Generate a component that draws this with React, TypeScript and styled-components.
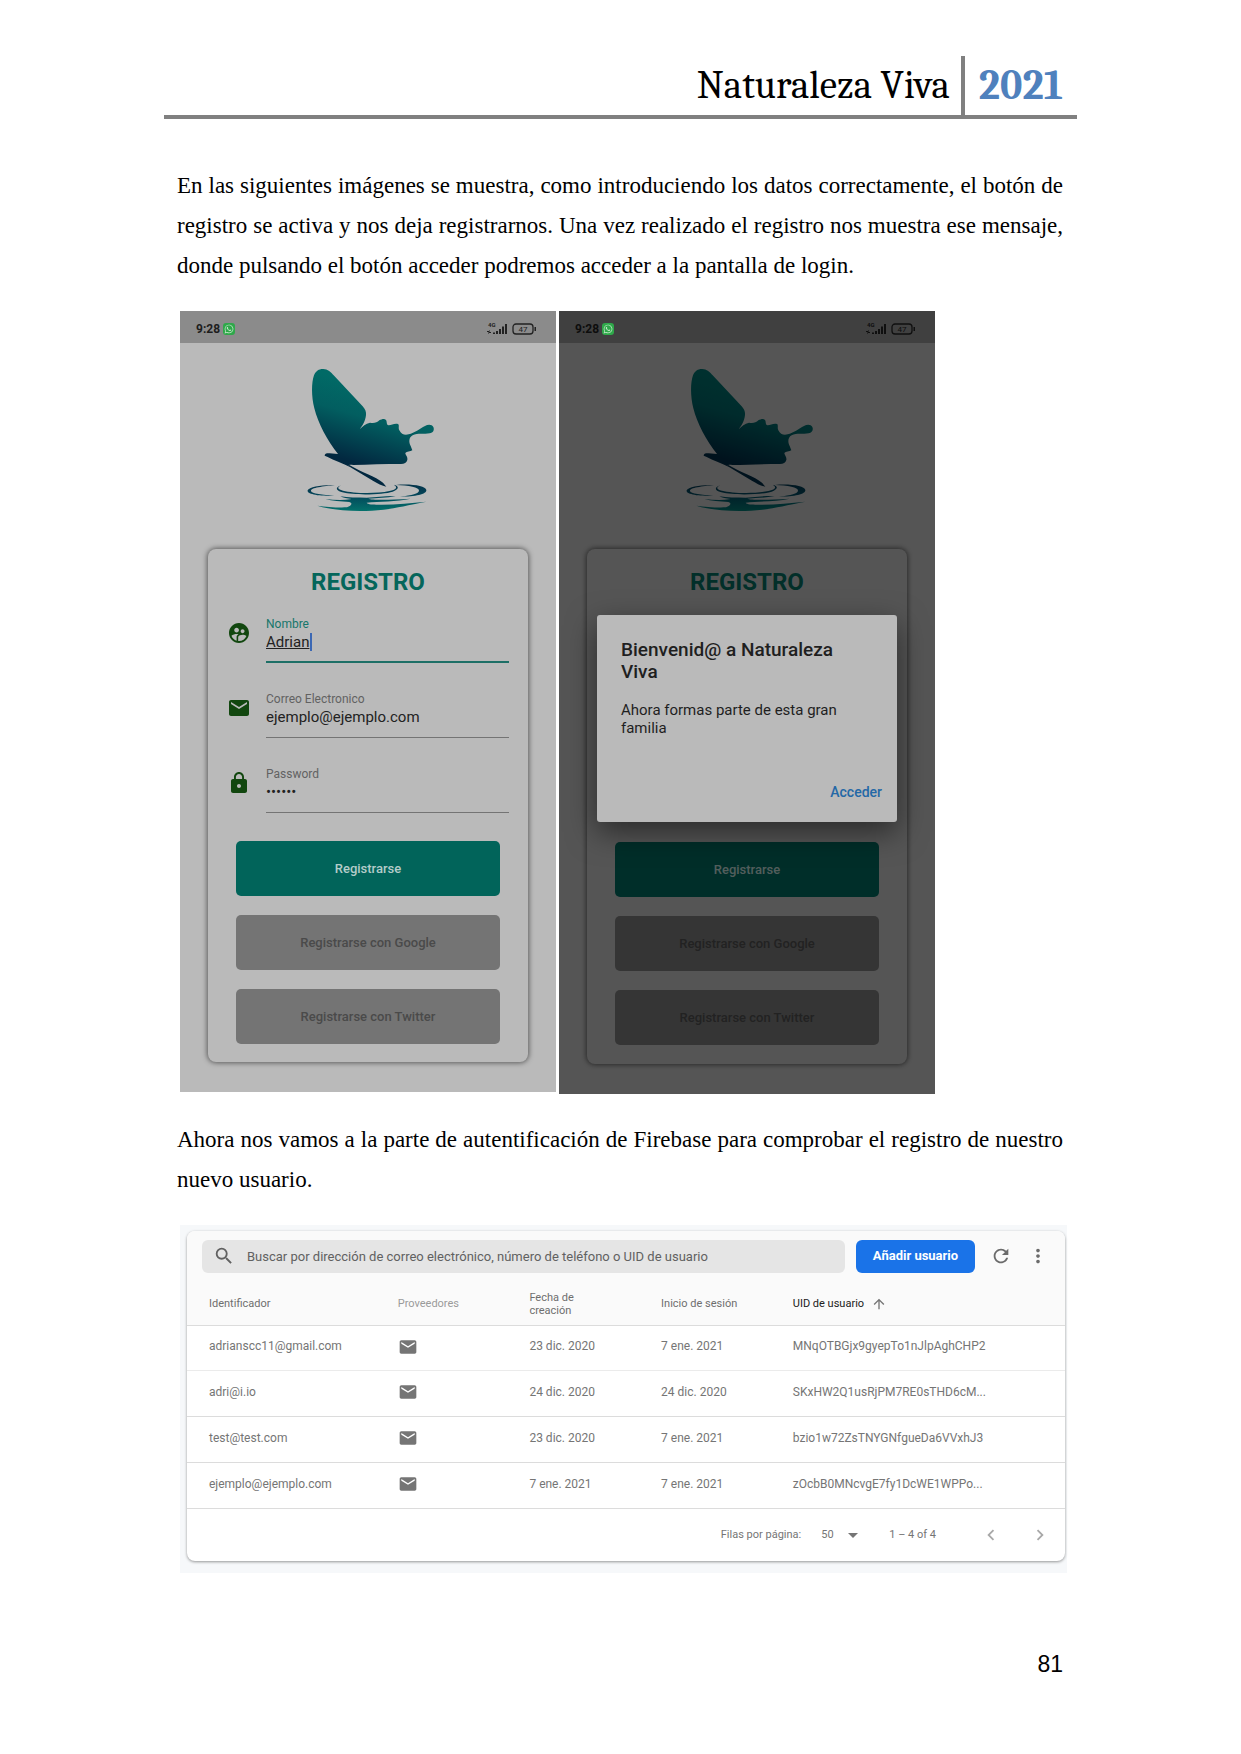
import React, { useId } from "react";
import styled, { createGlobalStyle } from "styled-components";
import {
  MdSupervisedUserCircle,
  MdEmail,
  MdLock,
  MdSearch,
  MdRefresh,
  MdMoreVert,
  MdArrowUpward,
  MdArrowDropDown,
  MdChevronLeft,
  MdChevronRight,
} from "react-icons/md";
import { FaWhatsapp } from "react-icons/fa";

const GlobalStyle = createGlobalStyle`
  *, *::before, *::after { box-sizing: border-box; }
  body { margin: 0; background: #fff; }
  button, input, select { font: inherit; }
`;

const Page = styled.main`
  padding: 56px 178px 76px 177px;
  color: #000;
`;

const PageHeader = styled.header`
  display: flex;
  justify-content: flex-end;
  margin: 0 -14px 0 -13px;
  border-bottom: 4px solid #808080;
  font-family: Cambria, Caladea, "Noto Serif", "Liberation Serif", serif;
  font-size: 39px;
  line-height: 59px;
`;

const DocTitle = styled.span`
  padding-right: 11px;
  border-right: 4px solid #808080;
`;

const Year = styled.strong`
  padding: 0 14px 0 14px;
  color: #4f81bd;
  font-size: 42px;
`;

const Paragraph = styled.p<{ $top: number }>`
  margin: ${(p) => p.$top}px 0 25px;
  font-family: "Liberation Serif", "Times New Roman", serif;
  font-size: 23px;
  line-height: 40px;
  text-align: justify;
`;

const Phones = styled.div`
  display: flex;
  align-items: flex-start;
  gap: 3px;
  padding-left: 3px;
`;

const PhoneFrame = styled.section`
  position: relative;
  width: 376px;
  padding-bottom: 30px;
  background: #bababa;
  font-family: Roboto, "Liberation Sans", sans-serif;
  color: #1d1d1d;
`;

const StatusBar = styled.div`
  display: flex;
  align-items: center;
  gap: 3px;
  height: 32px;
  padding: 3px 19px 0 16px;
  background: #8b8b8b;
`;

const Clock = styled.span`
  font-size: 12px;
  font-weight: 700;
  line-height: 16px;
`;

const ChatBadge = styled.span`
  z-index: 2;
  display: grid;
  place-items: center;
  width: 12px;
  height: 12px;
  border-radius: 3px;
  background: #2fa84a;
  color: #c2e8c8;
  font-size: 10px;
`;

const StatusIcons = styled.svg`
  margin-left: auto;
`;

const Logo = styled.svg`
  display: block;
  margin: 17px auto 29px;
`;

const FormCard = styled.form<{ $roomy?: boolean }>`
  display: flex;
  flex-direction: column;
  margin: 0 28px;
  padding: 19px 19px ${(p) => (p.$roomy ? 19 : 18)}px;
  border-radius: 8px;
  background: #bababa;
  box-shadow: 0 0 5px 1px rgba(0, 0, 0, 0.5);
`;

const FormTitle = styled.h2`
  margin: 0 0 21px;
  color: #05665b;
  font-size: 24px;
  font-weight: 700;
  line-height: 28px;
  text-align: center;
`;

const Fields = styled.div<{ $covered?: boolean }>`
  display: grid;
  gap: 29px;
  visibility: ${(p) => (p.$covered ? "hidden" : "visible")};
`;

const FieldRow = styled.div`
  display: flex;
  gap: 15px;
  height: 46px;
`;

const FieldIcon = styled.span`
  display: flex;
  padding-top: 4px;
  color: #12470f;
  font-size: 24px;
`;

const FieldBody = styled.div<{ $active?: boolean }>`
  display: flex;
  flex-direction: column;
  flex: 1;
  min-width: 0;
  border-bottom: ${(p) => (p.$active ? "2px solid #1d6f66" : "1px solid #747474")};

  label {
    color: ${(p) => (p.$active ? "#16766b" : "#626262")};
    font-size: 12px;
    line-height: 14px;
  }
`;

const ValueLine = styled.div`
  display: flex;
  align-items: center;
  height: 21px;
`;

const FieldInput = styled.input<{ $active?: boolean }>`
  width: ${(p) => (p.$active ? "44px" : "100%")};
  height: 20px;
  padding: 0;
  border: 0;
  outline: 0;
  background: transparent;
  color: #222;
  font-size: 15px;
  line-height: 20px;
  text-decoration: ${(p) => (p.$active ? "underline" : "none")};
`;

const Caret = styled.span`
  width: 2px;
  height: 18px;
  background: #3c68b4;
`;

const Actions = styled.div<{ $roomy?: boolean }>`
  display: grid;
  gap: 19px;
  margin: ${(p) => (p.$roomy ? 29 : 28)}px 9px 0;
`;

const ActionButton = styled.button<{ $primary?: boolean }>`
  height: 55px;
  padding: 0;
  border: 0;
  border-radius: 5px;
  background: ${(p) => (p.$primary ? "#01645a" : "#747474")};
  color: ${(p) => (p.$primary ? "#b4ccc9" : "#4a4a4a")};
  font-size: 13px;
  font-weight: 500;
`;

const Scrim = styled.div`
  position: absolute;
  inset: 0;
  z-index: 1;
  display: flex;
  align-items: flex-start;
  justify-content: center;
  padding-top: 304px;
  background: rgba(0, 0, 0, 0.54);
`;

const Dialog = styled.div`
  display: flex;
  flex-direction: column;
  width: 300px;
  height: 207px;
  padding: 24px 15px 20px 24px;
  border-radius: 3px;
  background: #bababa;
  box-shadow: 0 10px 30px rgba(0, 0, 0, 0.5);
  color: #1f1f1f;

  h3 {
    margin: 0 0 18px;
    padding-right: 20px;
    font-size: 19px;
    font-weight: 500;
    line-height: 22px;
  }

  p {
    margin: 0;
    padding-right: 20px;
    font-size: 15px;
    line-height: 18px;
  }
`;

const DialogButton = styled.button`
  align-self: flex-end;
  margin-top: auto;
  padding: 0;
  border: 0;
  background: transparent;
  color: #2468a6;
  font-size: 14px;
  font-weight: 500;
  line-height: 20px;
`;

const Console = styled.section`
  margin: 0 -4px 0 3px;
  padding: 6px 2px 12px 7px;
  background: #f6f8fa;
  font-family: Roboto, "Liberation Sans", sans-serif;
  color: #757575;
`;

const ConsoleCard = styled.div`
  overflow: hidden;
  border-radius: 8px;
  background: #fff;
  box-shadow: 0 1px 3px rgba(0, 0, 0, 0.4);
`;

const Toolbar = styled.div`
  display: flex;
  align-items: center;
  height: 52px;
  padding: 0 16px 2px 15px;
  background: #fafafa;
`;

const SearchBox = styled.label`
  display: flex;
  flex: 1;
  align-items: center;
  gap: 12px;
  height: 33px;
  margin-right: 11px;
  padding: 0 12px 0 11px;
  border-radius: 6px;
  background: #e5e5e5;
  color: #616161;
  font-size: 22px;

  svg {
    flex: none;
  }

  input {
    flex: 1;
    min-width: 0;
    padding: 0;
    border: 0;
    outline: 0;
    background: transparent;
    font-size: 13px;
  }

  input::placeholder {
    color: #616161;
    opacity: 1;
  }
`;

const AddButton = styled.button`
  width: 119px;
  height: 33px;
  padding: 0 0 2px;
  border: 0;
  border-radius: 6px;
  background: #1a73e8;
  color: #fff;
  font-size: 13px;
  font-weight: 700;
`;

const IconButton = styled.button<{ $faint?: boolean; $left: number }>`
  display: grid;
  place-items: center;
  width: 22px;
  height: 22px;
  margin-left: ${(p) => p.$left}px;
  padding: 0;
  border: 0;
  background: transparent;
  color: ${(p) => (p.$faint ? "#a8a8a8" : "#6b6b6b")};
  font-size: 22px;
`;

const UserTable = styled.table`
  width: 100%;
  border-collapse: collapse;
  table-layout: fixed;
  font-size: 12px;
  line-height: 13px;

  th, td {
    padding: 0;
    border-bottom: 1px solid #dcdcdc;
    text-align: left;
    font-weight: 400;
  }

  th:first-child, td:first-child {
    padding-left: 22px;
  }

  th {
    height: 42px;
    background: #fafafa;
    font-size: 11px;
  }

  td {
    height: 46px;
    padding-bottom: 2px;
  }

  tbody tr:first-child td {
    height: 45px;
    border-bottom-color: #ebebeb;
  }

  td svg {
    display: block;
    font-size: 20px;
  }
`;

const HeadCell = styled.th<{ $tone?: "soft" | "strong" }>`
  color: ${(p) => (p.$tone === "soft" ? "#9a9a9a" : p.$tone === "strong" ? "#212121" : "#6e6e6e")};

  span {
    display: inline-flex;
    align-items: center;
    gap: 7px;
  }

  svg {
    color: #757575;
    font-size: 16px;
  }
`;

const Pager = styled.div`
  display: flex;
  align-items: center;
  justify-content: flex-end;
  height: 52px;
  padding-right: 14px;
  font-size: 11px;
`;

const PageSize = styled.span`
  display: flex;
  align-items: center;
  margin: 0 24px 0 20px;

  select {
    width: 20px;
    padding: 0;
    border: 0;
    background: transparent;
    color: inherit;
    appearance: none;
  }

  svg {
    font-size: 24px;
  }
`;

const PageNumber = styled.footer`
  margin-top: 77px;
  font-family: "Liberation Sans", Arial, sans-serif;
  font-size: 23px;
  line-height: 28px;
  text-align: right;
`;

function PhoneStatus() {
  return (
    <StatusBar>
      <Clock>9:28</Clock>
      <ChatBadge>
        <FaWhatsapp />
      </ChatBadge>
      <StatusIcons width="50" height="14" viewBox="0 0 50 14" fill="#222">
        <text x="1" y="5" fontSize="6" fontWeight="700" fontFamily="Roboto, sans-serif">4G</text>
        <path d="M0 9h2v-1l1 1-1 1H0zM4 11H2v1l-1-1 1-1h2z" />
        <path d="M6 10.500h2V12H6zM9 9h2v3H9zM12 7h2v5h-2zM15 4.500h2V12h-2zM18 2h2v10h-2z" />
        <rect x="26" y="2" width="20" height="10" rx="3" fill="none" stroke="#222" strokeWidth="1.300" />
        <rect x="47.500" y="5" width="1.500" height="4" />
        <text x="36" y="10" fontSize="8" textAnchor="middle" fontFamily="Roboto, sans-serif">47</text>
      </StatusIcons>
    </StatusBar>
  );
}

function ButterflyLogo() {
  const id = useId();
  const wing = `${id}wing`;
  const water = `${id}water`;
  return (
    <Logo width="160" height="160" viewBox="-6 0 480 480" role="img" aria-label="Naturaleza Viva">
      <defs>
        <linearGradient id={wing} gradientUnits="userSpaceOnUse" x1="235" y1="80" x2="170" y2="300">
          <stop offset="0" stopColor="#016a66" />
          <stop offset="0.400" stopColor="#025e60" />
          <stop offset="1" stopColor="#022840" />
        </linearGradient>
        <linearGradient id={water} gradientUnits="userSpaceOnUse" x1="0" y1="375" x2="0" y2="452">
          <stop offset="0" stopColor="#04344a" />
          <stop offset="0.400" stopColor="#03465a" />
          <stop offset="1" stopColor="#04706b" />
        </linearGradient>
      </defs>
      <path
        fill={`url(#${wing})`}
        d="M98 27C112 26 123 36 131 46L218 139C226 148 229 156 228 165C226 184 218 196 209 208C218 199 227 190 240 188C252 190 261 188 268 181C275 178 283 175 288 180C292 185 288 194 296 196C305 196 313 189 324 192C329 195 324 204 328 211C334 223 345 227 356 223C374 219 389 206 405 198C414 193 426 193 430 201C434 210 429 219 419 220C403 223 383 219 368 226C356 232 356 247 362 258L367 271C361 275 350 274 346 279C346 285 354 290 352 300C350 308 343 312 333 312C285 312 235 314 189 315C180 313 170 317 178 315C214 337 257 349 279 368L289 380C276 378 262 370 250 363L180 321C156 310 132 301 113 291L104 287C105 280 111 280 119 280L144 282C112 242 84 190 73 145C64 110 64 68 72 46C77 33 87 27 98 27Z"
      />
      <g fill={`url(#${water})`}>
        <path d="M135 376C101 374 57 380 53 391C49 403 88 409 133 408C99 404 64 401 63 393C62 383 100 379 135 376Z" />
        <path d="M318 375C365 371 407 378 409 390C411 403 375 410 330 410C367 405 386 401 387 392C389 382 355 376 318 375Z" />
        <path d="M154 376C137 381 134 391 157 397C196 407 281 404 308 395C327 388 329 378 311 374C326 383 317 389 298 393C258 402 189 400 159 392C142 388 140 382 154 376Z" />
        <path d="M151 409C174 414 202 412 230 413C260 411 289 407 317 408C289 414 263 414 235 416C247 421 300 420 362 416C319 426 267 423 230 428C234 434 249 433 264 434C315 435 360 429 409 425C354 435 322 444 281 449C212 457 134 453 82 437C109 441 142 443 171 442C183 438 190 430 178 426C153 424 126 423 106 417C132 420 159 422 185 417C171 415 159 414 151 409Z" />
      </g>
    </Logo>
  );
}

type FieldProps = {
  icon: React.ReactNode;
  label: string;
  value: string;
  type?: string;
  active?: boolean;
};

function Field({ icon, label, value, type = "text", active }: FieldProps) {
  const id = useId();
  return (
    <FieldRow>
      <FieldIcon>{icon}</FieldIcon>
      <FieldBody $active={active}>
        <label htmlFor={id}>{label}</label>
        <ValueLine>
          <FieldInput id={id} type={type} defaultValue={value} $active={active} autoComplete="off" />
          {active && <Caret />}
        </ValueLine>
      </FieldBody>
    </FieldRow>
  );
}

function Phone({ dialog }: { dialog?: React.ReactNode }) {
  const open = Boolean(dialog);
  return (
    <PhoneFrame>
      <PhoneStatus />
      <ButterflyLogo />
      <FormCard $roomy={open}>
        <FormTitle>REGISTRO</FormTitle>
        <Fields $covered={open}>
          <Field icon={<MdSupervisedUserCircle />} label="Nombre" value="Adrian" active />
          <Field icon={<MdEmail />} label="Correo Electronico" value="ejemplo@ejemplo.com" />
          <Field icon={<MdLock />} label="Password" value="123456" type="password" />
        </Fields>
        <Actions $roomy={open}>
          <ActionButton type="button" $primary>Registrarse</ActionButton>
          <ActionButton type="button">Registrarse con Google</ActionButton>
          <ActionButton type="button">Registrarse con Twitter</ActionButton>
        </Actions>
      </FormCard>
      {open && <Scrim>{dialog}</Scrim>}
    </PhoneFrame>
  );
}

const users = [
  { id: "adrianscc11@gmail.com", created: "23 dic. 2020", login: "7 ene. 2021", uid: "MNqOTBGjx9gyepTo1nJlpAghCHP2" },
  { id: "adri@i.io", created: "24 dic. 2020", login: "24 dic. 2020", uid: "SKxHW2Q1usRjPM7RE0sTHD6cM..." },
  { id: "test@test.com", created: "23 dic. 2020", login: "7 ene. 2021", uid: "bzio1w72ZsTNYGNfgueDa6VVxhJ3" },
  { id: "ejemplo@ejemplo.com", created: "7 ene. 2021", login: "7 ene. 2021", uid: "zOcbB0MNcvgE7fy1DcWE1WPPo..." },
];

function UserConsole() {
  return (
    <Console>
      <ConsoleCard>
        <Toolbar>
          <SearchBox>
            <MdSearch />
            <input
              type="search"
              aria-label="Buscar usuario"
              placeholder="Buscar por dirección de correo electrónico, número de teléfono o UID de usuario"
            />
          </SearchBox>
          <AddButton type="button">Añadir usuario</AddButton>
          <IconButton type="button" aria-label="Actualizar" $left={15}><MdRefresh /></IconButton>
          <IconButton type="button" aria-label="Más opciones" $left={15}><MdMoreVert /></IconButton>
        </Toolbar>
        <UserTable>
          <colgroup>
            <col style={{ width: "24%" }} />
            <col style={{ width: "15%" }} />
            <col style={{ width: "15%" }} />
            <col style={{ width: "15%" }} />
            <col />
          </colgroup>
          <thead>
            <tr>
              <HeadCell>Identificador</HeadCell>
              <HeadCell $tone="soft">Proveedores</HeadCell>
              <HeadCell>Fecha de<br />creación</HeadCell>
              <HeadCell>Inicio de sesión</HeadCell>
              <HeadCell $tone="strong"><span>UID de usuario <MdArrowUpward /></span></HeadCell>
            </tr>
          </thead>
          <tbody>
            {users.map((user) => (
              <tr key={user.uid}>
                <td>{user.id}</td>
                <td><MdEmail /></td>
                <td>{user.created}</td>
                <td>{user.login}</td>
                <td>{user.uid}</td>
              </tr>
            ))}
          </tbody>
        </UserTable>
        <Pager>
          <label htmlFor="page-size">Filas por página:</label>
          <PageSize>
            <select id="page-size" defaultValue="50">
              <option>50</option>
            </select>
            <MdArrowDropDown />
          </PageSize>
          <span>1 – 4 of 4</span>
          <IconButton type="button" aria-label="Página anterior" $faint $left={44}><MdChevronLeft /></IconButton>
          <IconButton type="button" aria-label="Página siguiente" $faint $left={27}><MdChevronRight /></IconButton>
        </Pager>
      </ConsoleCard>
    </Console>
  );
}

export default function App() {
  return (
    <Page>
      <GlobalStyle />
      <PageHeader>
        <DocTitle>Naturaleza Viva</DocTitle>
        <Year>2021</Year>
      </PageHeader>
      <Paragraph $top={47}>
        En las siguientes imágenes se muestra, como introduciendo los datos correctamente, el botón de
        registro se activa y nos deja registrarnos. Una vez realizado el registro nos muestra ese mensaje,
        donde pulsando el botón acceder podremos acceder a la pantalla de login.
      </Paragraph>
      <Phones>
        <Phone />
        <Phone
          dialog={
            <Dialog role="dialog" aria-label="Bienvenida">
              <h3>Bienvenid@ a Naturaleza Viva</h3>
              <p>Ahora formas parte de esta gran familia</p>
              <DialogButton type="button">Acceder</DialogButton>
            </Dialog>
          }
        />
      </Phones>
      <Paragraph $top={26}>
        Ahora nos vamos a la parte de autentificación de Firebase para comprobar el registro de nuestro
        nuevo usuario.
      </Paragraph>
      <UserConsole />
      <PageNumber>81</PageNumber>
    </Page>
  );
}
